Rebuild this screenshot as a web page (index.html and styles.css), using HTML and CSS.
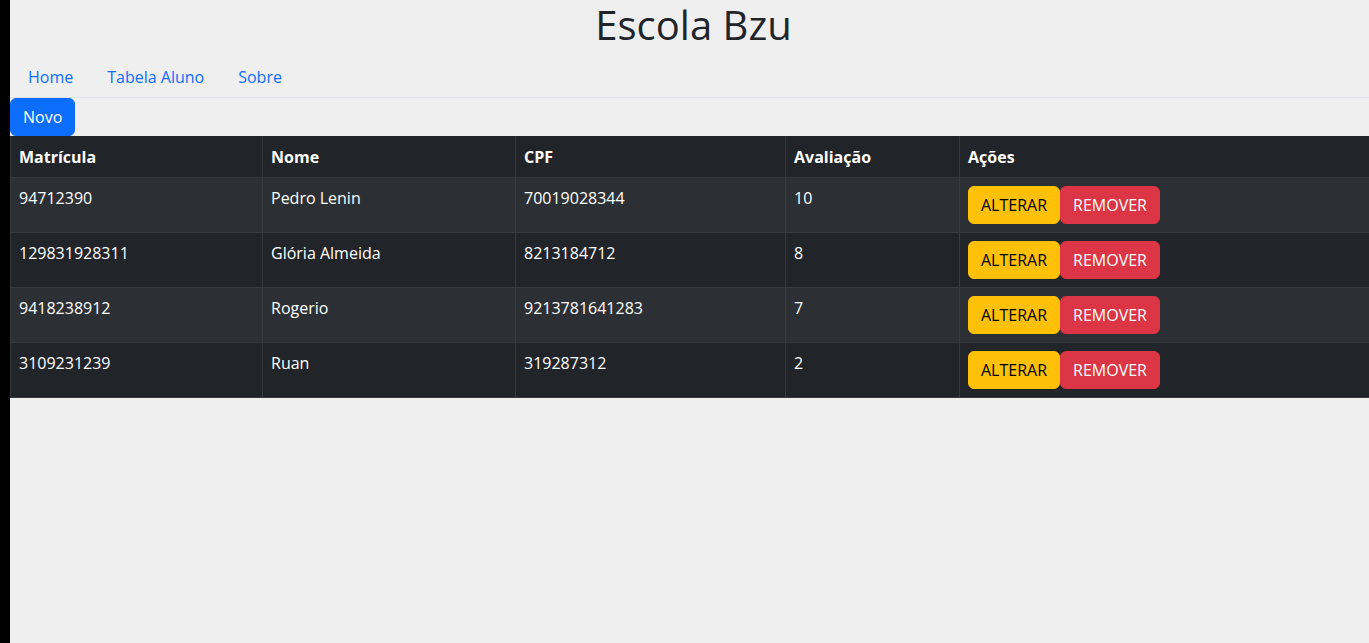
FILE: index.html
```html
<!DOCTYPE html>
<html lang="pt-BR">
<head>
<meta charset="utf-8">
<title>Escola Bzu</title>
<link rel="stylesheet" href="styles.css">
</head>
<body>
<div class="strip"></div>
<main class="main">
  <h1 class="title">Escola Bzu</h1>
  <nav class="nav">
    <a class="nav-link" href="#">Home</a>
    <a class="nav-link" href="#">Tabela Aluno</a>
    <a class="nav-link" href="#">Sobre</a>
  </nav>
  <div class="toolbar"><button class="btn btn-primary">Novo</button></div>
  <table class="table">
    <colgroup>
      <col class="c1"><col class="c2"><col class="c3"><col class="c4"><col class="c5">
    </colgroup>
    <thead>
      <tr><th>Matrícula</th><th>Nome</th><th>CPF</th><th>Avaliação</th><th>Ações</th></tr>
    </thead>
    <tbody>
      <tr class="odd"><td>94712390</td><td>Pedro Lenin</td><td>70019028344</td><td>10</td><td><button class="btn btn-warning">ALTERAR</button><button class="btn btn-danger">REMOVER</button></td></tr>
      <tr><td>129831928311</td><td>Glória Almeida</td><td>8213184712</td><td>8</td><td><button class="btn btn-warning">ALTERAR</button><button class="btn btn-danger">REMOVER</button></td></tr>
      <tr class="odd"><td>9418238912</td><td>Rogerio</td><td>9213781641283</td><td>7</td><td><button class="btn btn-warning">ALTERAR</button><button class="btn btn-danger">REMOVER</button></td></tr>
      <tr><td>3109231239</td><td>Ruan</td><td>319287312</td><td>2</td><td><button class="btn btn-warning">ALTERAR</button><button class="btn btn-danger">REMOVER</button></td></tr>
    </tbody>
  </table>
</main>
</body>
</html>
```
FILE: styles.css
```css
* { box-sizing: border-box; }
html, body { height: 100%; }
body {
  margin: 0;
  display: flex;
  background: #efefef;
  font-family: "Open Sans", "Noto Sans", sans-serif;
  font-size: 16px;
  line-height: 24px;
  color: #212529;
}
.strip { width: 10px; flex: none; background: #000; }
.main { flex: 1; min-width: 0; }
.title {
  margin: 0 0 7px;
  padding: 0 0 0 8px;
  font-size: 40px;
  line-height: 50px;
  font-weight: 400;
  text-align: center;
  color: #212529;
}
.nav {
  display: flex;
  border-bottom: 1px solid #dee2e6;
}
.nav-link {
  display: block;
  padding: 8px 17px;
  color: #0d6efd;
  text-decoration: none;
}
.nav-link:first-child { padding-left: 18px; }
.toolbar { display: flex; }
.btn {
  font-family: inherit;
  font-size: 16px;
  line-height: 24px;
  padding: 6px 12px;
  border: 1px solid transparent;
  border-radius: 6px;
  cursor: pointer;
}
.btn-primary { background: #0d6efd; color: #fff; border-color: #0d6efd; }
.btn-warning { background: #ffc107; color: #000; border-color: #ffc107; }
.btn-danger { background: #dc3545; color: #fff; border-color: #dc3545; }
.table {
  width: 100%;
  border-collapse: collapse;
  background: #212529;
  color: #fff;
  table-layout: fixed;
}
.c1 { width: 252px; }
.c2 { width: 253px; }
.c3 { width: 270px; }
.c4 { width: 174px; }
.c5 { width: auto; }
.table th, .table td {
  padding: 8px;
  border: 1px solid #373b3e;
  text-align: left;
  vertical-align: top;
}
.table tr > :last-child { border-right: 0; }
.table thead th { border-top: 0; font-weight: 700; padding-top: 9px; padding-bottom: 8px; }
.table tr.odd td { background: #2c3034; }
```
